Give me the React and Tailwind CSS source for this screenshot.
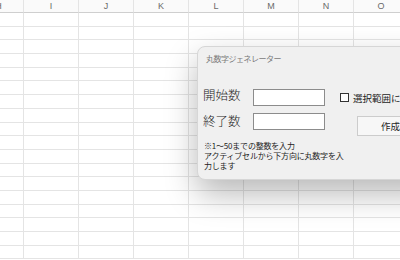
import React from "react";

const cols = ["H", "I", "J", "K", "L", "M", "N", "O"];
const ROWS = 18;

export default function App() {
  return (
    <div className="relative w-[400px] h-[260px] overflow-hidden bg-white">
      {/* Spreadsheet grid */}
      <div className="grid grid-cols-[24px_repeat(7,55px)] w-[409px]" style={{ fontFamily: '"Liberation Sans", Arial, sans-serif' }}>
        {cols.map((c) => (
          <div
            key={c}
            className="h-[13px] border-r border-b border-r-[#e4e4e4] border-b-[#cfcfcf] bg-[#fafafa] text-[9px] leading-[12px] text-[#6a6a6a] text-center overflow-hidden"
          >
            {c === "H" ? <span className="inline-block translate-x-[-13px]">H</span> : c}
          </div>
        ))}
        {Array.from({ length: ROWS * cols.length }).map((_, i) => (
          <div key={i} className="h-[13.7px] border-r border-b border-[#e4e4e4]" />
        ))}
      </div>

      {/* Dialog window */}
      <div
        className="absolute left-[197px] top-[46px] w-[240px] h-[134px] rounded-[8px] border border-[#d6d6d6] bg-[#f0f0f0] shadow-[0_14px_32px_rgba(0,0,0,0.28)] pt-[6px] pl-[5px]"
        style={{ fontFamily: '"Noto Sans CJK JP", "Noto Sans", sans-serif' }}
      >
        <div className="ml-[3px] h-[11px] text-[8px] leading-[11px] tracking-[-0.5px] text-[#7a7a7a] whitespace-nowrap">
          丸数字ジェネレーター
        </div>

        <div className="mt-[25px] flex">
          <div className="flex flex-col gap-[7px]">
            <div className="flex items-start h-[17px]">
              <span className="w-[50px] -mt-[1px] text-[12.5px] leading-[13px] font-light text-[#1e1e1e] whitespace-nowrap">開始数</span>
              <div className="w-[72px] h-[17px] border border-[#8c8c8c] bg-white" />
            </div>
            <div className="flex items-start h-[17px]">
              <span className="w-[50px] mt-[1px] text-[12.5px] leading-[13px] font-light text-[#1e1e1e] whitespace-nowrap">終了数</span>
              <div className="w-[72px] h-[17px] border border-[#8c8c8c] bg-white" />
            </div>
          </div>

          <div className="ml-[15px] flex flex-col">
            <div className="mt-[4px] h-[9px] flex items-center">
              <div className="w-[9px] h-[9px] border border-[#333] bg-white shrink-0" />
              <span className="ml-[4px] text-[9.5px] leading-[10px] text-[#1e1e1e] whitespace-nowrap">選択範囲に丸数字を入力</span>
            </div>
            <div className="mt-[14px] ml-[17px] w-[80px] h-[20px] border border-[#cccccc] bg-[#f7f7f7] flex items-center pl-[23px] text-[9.5px] text-[#1e1e1e]">
              作成
            </div>
          </div>
        </div>

        <div className="mt-[5px] ml-[1px] text-[8px] leading-[10px] tracking-[-0.2px] text-[#1e1e1e] whitespace-nowrap">
          ※1～50までの整数を入力
          <br />
          アクティブセルから下方向に丸数字を入
          <br />
          力します
        </div>
      </div>
    </div>
  );
}
